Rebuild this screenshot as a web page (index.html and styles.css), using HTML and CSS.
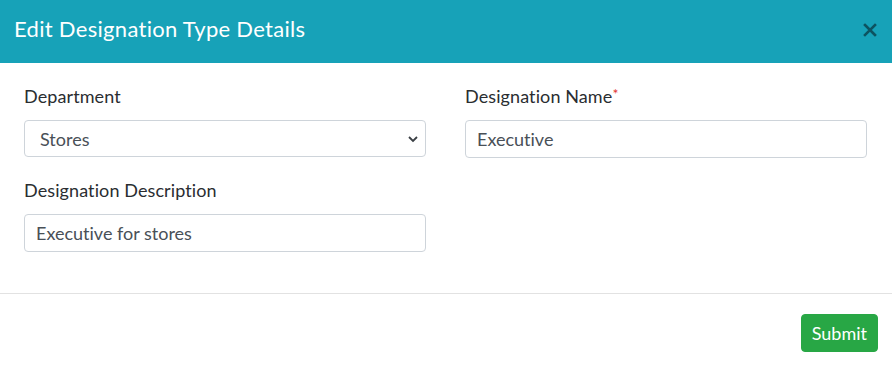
FILE: index.html
```html
<!DOCTYPE html>
<html lang="en">
<head>
    <meta charset="UTF-8">
    <meta name="viewport" content="width=device-width, initial-scale=1.0">
    <title>Edit Designation Type Details</title>
    <link rel="stylesheet" href="styles.css">
</head>
<body>
    <div class="modal">
        <div class="modal-header">
            <h5 class="modal-title">Edit Designation Type Details</h5>
            <button class="close" type="button" aria-label="Close">
                <svg width="14" height="14" viewBox="0 0 14 14">
                    <path d="M2 2 L12 12 M12 2 L2 12" stroke="currentColor" stroke-width="2.6" stroke-linecap="square"/>
                </svg>
            </button>
        </div>

        <div class="modal-body">
            <div class="form-group">
                <label for="dept">Department</label>
                <div class="select-wrap">
                    <select id="dept" class="form-control">
                        <option>Stores</option>
                        <option>Accounts</option>
                        <option>Production</option>
                    </select>
                    <svg class="chevron" width="12" height="8" viewBox="0 0 12 8">
                        <path d="M2 2 L6 6 L10 2" fill="none" stroke="currentColor" stroke-width="1.8"/>
                    </svg>
                </div>
            </div>
            <div class="form-group">
                <label for="dname">Designation Name<sup class="req">*</sup></label>
                <input type="text" id="dname" class="form-control" value="Executive">
            </div>
            <div class="form-group">
                <label for="ddesc">Designation Description</label>
                <input type="text" id="ddesc" class="form-control" value="Executive for stores">
            </div>
        </div>

        <div class="modal-footer">
            <button class="btn-submit" type="button">Submit</button>
        </div>
    </div>
</body>
</html>
```

FILE: styles.css
```css
body{
    margin: 0;
    background: #fff;
    font-family: Lato, "Open Sans", sans-serif;
    font-variant-ligatures: none;
    color: #2a2d31;
}
.modal{
    width: 892px;
}
/* header */
.modal-header{
    display: flex;
    align-items: center;
    justify-content: space-between;
    height: 63px;
    padding: 0 14px 6px 14px;
    box-sizing: border-box;
    background-color: #17a2b8;
}
.modal-title{
    margin: 0;
    color: #fff;
    font-size: 22px;
    font-weight: 400;
    letter-spacing: 0.3px;
}
.close{
    border: none;
    background: transparent;
    padding: 0;
    color: #0d5360;
    display: flex;
    margin-right: 1px;
    margin-top: 2px;
}
/* body */
.modal-body{
    display: grid;
    grid-template-columns: 402px 402px;
    column-gap: 39px;
    padding: 21px 25px 21px 24px;
    border-bottom: 1px solid #e2e2e2;
}
.form-group{
    margin-bottom: 20px;
}
.form-group label{
    display: block;
    font-size: 18px;
    line-height: 24px;
    margin-bottom: 12px;
    letter-spacing: 0.1px;
}
.req{
    color: #e3342f;
    font-size: 14px;
    line-height: 0;
    vertical-align: 4px;
}
.form-control{
    display: block;
    width: 100%;
    height: 38px;
    box-sizing: border-box;
    padding: 6px 11px;
    font-family: Lato, "Open Sans", sans-serif;
    font-variant-ligatures: none;
    font-size: 18px;
    color: #495057;
    background: #fff;
    border: 1px solid #ced4da;
    border-radius: 4px;
    outline: none;
}
.select-wrap{
    position: relative;
}
.select-wrap select{
    appearance: none;
    -webkit-appearance: none;
    height: 37px;
    padding-left: 15px;
}
.chevron{
    position: absolute;
    right: 7px;
    top: 15px;
    color: #3a3f44;
}
/* footer */
.modal-footer{
    display: flex;
    justify-content: flex-end;
    padding: 20px 14px 19px 0;
}
.btn-submit{
    height: 38px;
    padding: 0 10px;
    font-family: Lato, "Open Sans", sans-serif;
    font-size: 18px;
    color: #fff;
    background-color: #28a745;
    border: 1px solid #28a745;
    border-radius: 4px;
}
```
